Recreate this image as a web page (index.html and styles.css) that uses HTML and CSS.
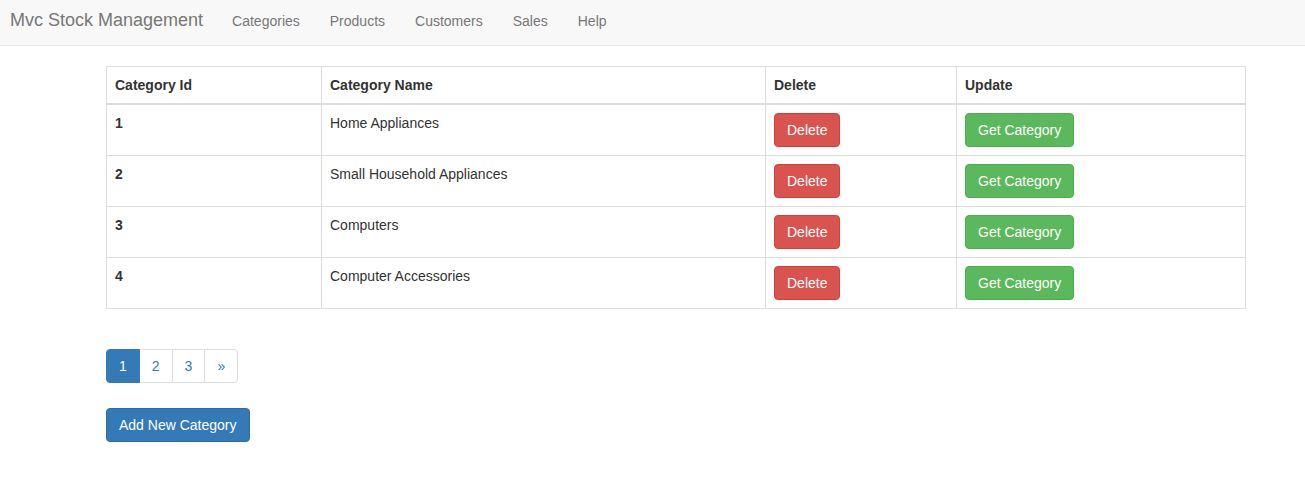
FILE: index.html
```html
<!DOCTYPE html>
<html>
<head>
<meta charset="utf-8">
<title>Mvc Stock Management</title>
<link rel="stylesheet" href="styles.css">
</head>
<body>
<nav class="navbar">
  <a class="brand" href="#">Mvc Stock Management</a>
  <ul class="nav">
    <li><a href="#">Categories</a></li>
    <li><a href="#">Products</a></li>
    <li><a href="#">Customers</a></li>
    <li><a href="#">Sales</a></li>
    <li><a href="#">Help</a></li>
  </ul>
</nav>
<main class="container">
  <table class="table">
    <thead>
      <tr><th class="c1">Category Id</th><th class="c2">Category Name</th><th class="c3">Delete</th><th>Update</th></tr>
    </thead>
    <tbody>
      <tr><th>1</th><td>Home Appliances</td><td><a class="btn btn-danger" href="#">Delete</a></td><td><a class="btn btn-success" href="#">Get Category</a></td></tr>
      <tr><th>2</th><td>Small Household Appliances</td><td><a class="btn btn-danger" href="#">Delete</a></td><td><a class="btn btn-success" href="#">Get Category</a></td></tr>
      <tr><th>3</th><td>Computers</td><td><a class="btn btn-danger" href="#">Delete</a></td><td><a class="btn btn-success" href="#">Get Category</a></td></tr>
      <tr><th>4</th><td>Computer Accessories</td><td><a class="btn btn-danger" href="#">Delete</a></td><td><a class="btn btn-success" href="#">Get Category</a></td></tr>
    </tbody>
  </table>
  <ul class="pagination">
    <li class="active"><a href="#">1</a></li>
    <li><a href="#">2</a></li>
    <li><a href="#">3</a></li>
    <li><a href="#">»</a></li>
  </ul>
  <div class="actions">
    <a class="btn btn-primary" href="#">Add New Category</a>
  </div>
</main>
</body>
</html>
```
FILE: styles.css
```css
* { box-sizing: border-box; }
html, body { margin: 0; padding: 0; }
body {
  font-family: "Liberation Sans", Arial, Helvetica, sans-serif;
  font-size: 14px;
  line-height: 1.42857143;
  color: #333;
  background: #fff;
}
a { text-decoration: none; }

.navbar {
  display: flex;
  align-items: center;
  height: 46px;
  padding-bottom: 4px;
  background: #f8f8f8;
  border-bottom: 1px solid #e7e7e7;
  margin-bottom: 20px;
}
.brand {
  font-size: 18px;
  line-height: 20px;
  color: #777;
  padding: 0 14px 1px 10px;
}
.nav {
  display: flex;
  list-style: none;
  margin: 0;
  padding: 0;
}
.nav a {
  display: block;
  padding: 0 15px;
  color: #777;
  line-height: 20px;
}

.container {
  width: 1170px;
  padding: 0 15px;
  margin: 0 0 0 91px;
}

.table {
  width: 100%;
  border-collapse: collapse;
  border: 1px solid #ddd;
  margin-bottom: 20px;
}
.table th, .table td {
  padding: 8px;
  border: 1px solid #ddd;
  text-align: left;
  vertical-align: top;
  line-height: 20px;
}
.table thead th {
  border-bottom: 2px solid #ddd;
  vertical-align: bottom;
}
.c1 { width: 215px; }
.c2 { width: 444px; }
.c3 { width: 191px; }

.btn {
  display: inline-block;
  padding: 6px 12px;
  font-size: 14px;
  line-height: 20px;
  border: 1px solid transparent;
  border-radius: 4px;
  color: #fff;
  white-space: nowrap;
}
.btn-danger { background: #d9534f; border-color: #d43f3a; }
.btn-success { background: #5cb85c; border-color: #4cae4c; }
.btn-primary { background: #337ab7; border-color: #2e6da4; }

.pagination {
  display: flex;
  list-style: none;
  padding: 0;
  margin: 40px 0 20px;
}
.pagination a {
  display: block;
  padding: 6px 12px;
  line-height: 20px;
  color: #337ab7;
  background: #fff;
  border: 1px solid #ddd;
  margin-left: -1px;
}
.pagination li:first-child a {
  margin-left: 0;
  border-radius: 4px 0 0 4px;
}
.pagination li:last-child a { border-radius: 0 4px 4px 0; }
.pagination .active a {
  background: #337ab7;
  border-color: #337ab7;
  color: #fff;
  position: relative;
  z-index: 2;
}
.actions { padding-top: 5px; }
```
